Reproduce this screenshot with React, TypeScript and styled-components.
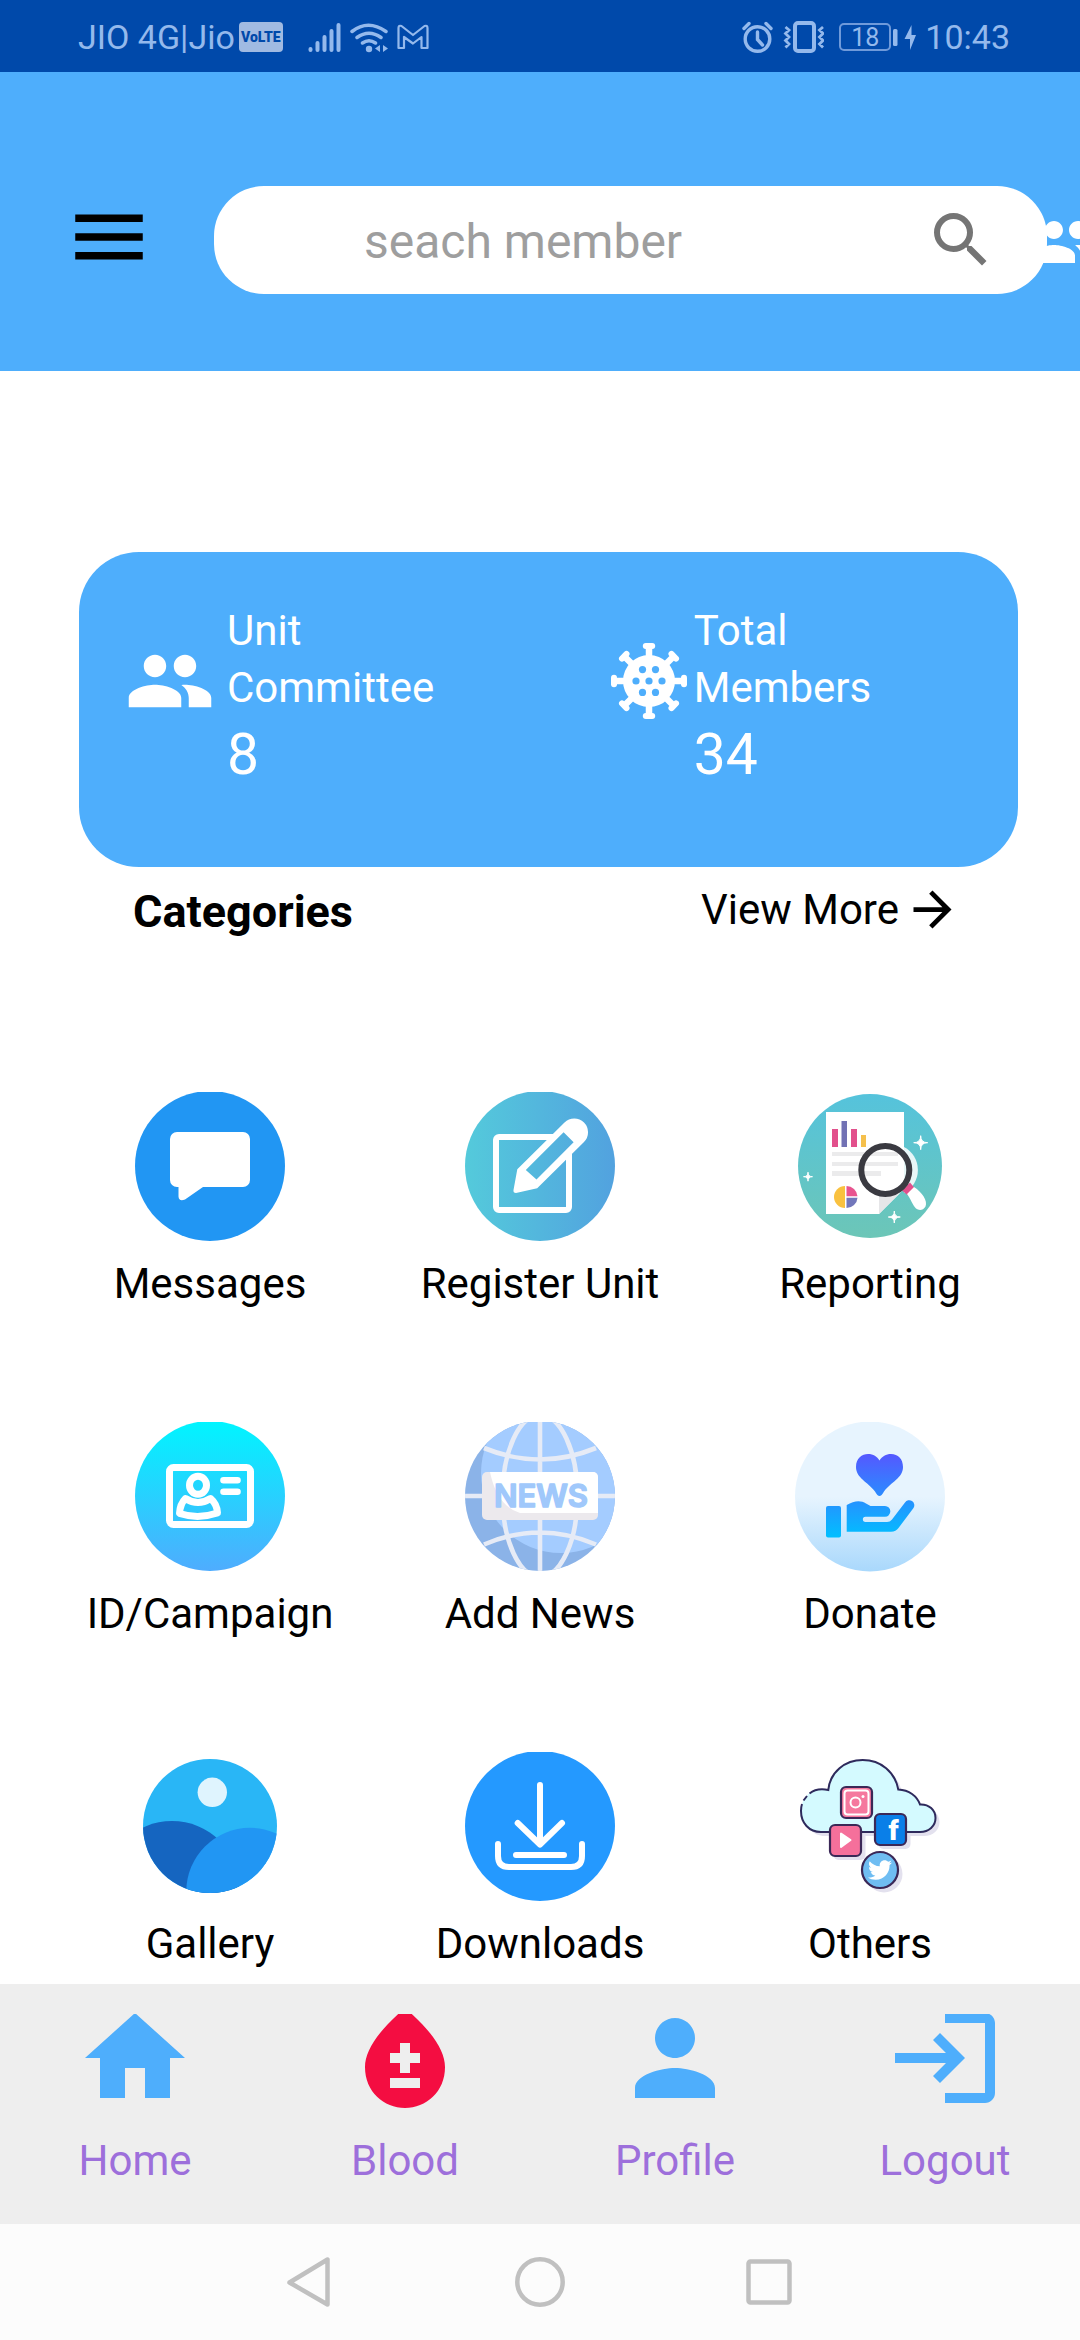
import React from 'react';
import styled, { createGlobalStyle } from 'styled-components';
import { MdPeople, MdSearch, MdMenu, MdArrowForward } from 'react-icons/md';
import { FaTwitter } from 'react-icons/fa';

const BLUE = '#4eaefc';
const STATUS_TINT = '#94b9ec';

const GlobalStyle = createGlobalStyle`
  *, *::before, *::after { box-sizing: border-box; }
  body { margin: 0; background: #ffffff; font-family: Roboto, "Noto Sans", sans-serif; color: #000000; }
  button, input { font: inherit; color: inherit; }
  svg { display: block; flex: none; }
`;

const Screen = styled.div`
  min-height: 100vh;
  display: flex;
  flex-direction: column;
  overflow-x: hidden;
`;

const StatusBar = styled.div`
  display: flex;
  align-items: center;
  justify-content: space-between;
  height: 72px;
  padding: 2px 70px 0 78px;
  background: #0049aa;
  color: ${STATUS_TINT};
  font-size: 34px;
  line-height: 40px;
`;

const StatusGroup = styled.div`
  display: flex;
  align-items: center;
`;

const VolteBadge = styled.span`
  width: 44px;
  height: 30px;
  margin: 0 24px 0 4px;
  border-radius: 4px;
  background: #a0bae2;
  color: #0049aa;
  font-size: 14px;
  font-weight: 900;
  line-height: 30px;
  text-align: center;
`;

const BatteryLevel = styled.span`
  width: 52px;
  height: 28px;
  margin-left: 15px;
  border: 2px solid #6f9ada;
  border-radius: 5px;
  font-size: 25px;
  line-height: 26px;
  text-align: center;
`;

const IconButton = styled.button`
  flex: none;
  padding: 0;
  border: 0;
  background: none;
  cursor: pointer;
`;

const Header = styled.header`
  display: flex;
  align-items: center;
  padding: 114px 0 77px 64px;
  background: ${BLUE};
  overflow: hidden;
`;

const MenuButton = styled(IconButton)`
  margin: 0 60px 6px 0;
`;

const SearchBox = styled.form`
  flex: 1;
  min-width: 0;
  display: flex;
  align-items: center;
  height: 108px;
  padding: 0 50px 0 150px;
  border-radius: 50px;
  background: #ffffff;
`;

const SearchInput = styled.input`
  flex: 1;
  min-width: 0;
  height: 72px;
  padding: 2px 0 0;
  border: 0;
  outline: 0;
  background: none;
  font-size: 48px;
  &::placeholder { color: #9e9e9e; opacity: 1; }
`;

const SearchButton = styled(IconButton)`
  color: #757575;
`;

const MembersButton = styled(IconButton)`
  margin: 4px -22px 0 -17px;
  color: #ffffff;
`;

const Main = styled.main`
  flex: 1;
`;

const StatsCard = styled.section`
  display: grid;
  grid-template-columns: 13fr 10fr;
  margin: 181px 62px 0 79px;
  padding: 50px 46px 73px;
  border-radius: 60px;
  background: ${BLUE};
  color: #ffffff;
`;

const Stat = styled.div<{ $gap: number }>`
  display: flex;
  align-items: flex-start;
  gap: ${(p) => p.$gap}px;
`;

const StatIcon = styled.div`
  margin-top: 34px;
`;

const StatLabel = styled.div`
  width: min-content;
  font-size: 42px;
  line-height: 57px;
`;

const StatValue = styled.div`
  font-size: 57px;
  line-height: 78px;
`;

const SectionBar = styled.div`
  display: flex;
  align-items: flex-start;
  justify-content: space-between;
  padding: 14px 119px 0 133px;
`;

const SectionTitle = styled.h2`
  margin: 2px 0 0;
  font-size: 45px;
  font-weight: 700;
  line-height: 57px;
`;

const ViewMore = styled.a`
  display: flex;
  align-items: flex-start;
  gap: 5px;
  color: inherit;
  text-decoration: none;
  font-size: 42px;
  line-height: 57px;
`;

const CategoryGrid = styled.div`
  display: grid;
  grid-template-columns: repeat(3, 1fr);
  row-gap: 110px;
  padding: 152px 45px 12px;
`;

const Category = styled.button`
  display: flex;
  flex-direction: column;
  align-items: center;
  gap: 13px;
  padding: 0;
  border: 0;
  background: none;
  font-size: 42px;
  line-height: 57px;
  white-space: nowrap;
  cursor: pointer;
`;

const TabBar = styled.nav`
  display: grid;
  grid-template-columns: repeat(4, 1fr);
  padding: 30px 0 35px;
  background: #eeeeee;
`;

const Tab = styled.a`
  display: flex;
  flex-direction: column;
  align-items: center;
  gap: 14px;
  color: #9d6fdb;
  text-decoration: none;
  font-size: 42px;
  line-height: 57px;
`;

const SystemBar = styled.div`
  display: flex;
  align-items: center;
  justify-content: center;
  gap: 180px;
  height: 116px;
  background: #fcfcfc;
`;

/* ---------- status bar glyphs ---------- */

const ConnectionIcons = () => (
  <svg width="122" height="32" viewBox="0 0 122 32" fill="none" stroke={STATUS_TINT} strokeLinecap="round">
    <g strokeWidth="4">
      <path d="M3.500 28v1M10.500 22v7M17.500 16v13M24.500 10v19M31.500 4v25" />
      <path d="M45 10.500Q61 -2 79 10.500M50 16.500Q62 8 74 16.500M55.500 22Q62 17.500 68.500 22" strokeWidth="3.500" />
    </g>
    <circle cx="62" cy="28" r="3.200" fill={STATUS_TINT} stroke="none" />
    <path d="M73 24v7l-5-3.500zM76 31v-7l5 3.500z" fill={STATUS_TINT} stroke="none" />
    <path
      d="M91.500 27V7q0-3 3-2L106 14l11.500-9q3-1 3 2v20h-6V16L106 22.500 97 16v11z"
      strokeWidth="2.200"
      strokeLinejoin="round"
    />
  </svg>
);

const AlarmVibrateIcons = () => (
  <svg width="82" height="32" viewBox="0 0 82 32" fill="none" stroke={STATUS_TINT} strokeWidth="3.400">
    <circle cx="15.500" cy="18" r="12.300" />
    <path d="M15.500 11v7.500l5 5.500M2 7.500l5-5M24 2.500l5 5" strokeLinecap="round" />
    <rect x="53" y="2" width="19" height="28" rx="3" strokeWidth="4" />
    <path
      d="M43.500 6l3.500 3-3.500 3.500 3.500 3.500-3.500 3.500 3.500 3.500-3.500 3.500M81 6l-3.500 3 3.500 3.500-3.500 3.500 3.500 3.500-3.500 3.500 3.500 3.500"
      strokeWidth="2.800"
    />
  </svg>
);

const ChargingIcon = () => (
  <svg width="34" height="32" viewBox="0 0 34 32" fill={STATUS_TINT}>
    <rect x="2" y="8" width="4.500" height="17" rx="1.500" />
    <path d="M20.500 4v10h4.500l-6 15V18h-5.500z" />
  </svg>
);

/* ---------- stat card ---------- */

const VirusIcon = () => (
  <svg width="90" height="90" viewBox="-45 -45 90 90">
    <g fill="none" stroke="#ffffff" strokeLinecap="round">
      {[0, 45, 90, 135, 180, 225, 270, 315].map((a) => (
        <g key={a} transform={`rotate(${a})`}>
          <path d="M0 -24V-34" strokeWidth="6.500" />
          <path d="M-3.200 -35H3.200" strokeWidth="6" />
        </g>
      ))}
    </g>
    <circle r="26" fill="#ffffff" />
    <g fill={BLUE}>
      <circle r="3.600" />
      <circle cx="-13" r="3.600" />
      <circle cx="13" r="3.600" />
      <circle cx="-6.500" cy="-11.400" r="3.600" />
      <circle cx="6.500" cy="-11.400" r="3.600" />
      <circle cx="-6.500" cy="11.400" r="3.600" />
      <circle cx="6.500" cy="11.400" r="3.600" />
    </g>
  </svg>
);

/* ---------- category artwork, 150 x 150 each ---------- */

const Art = ({ children }: { children: React.ReactNode }) => (
  <svg width="150" height="150" viewBox="0 0 150 150" aria-hidden="true">
    {children}
  </svg>
);

const MessagesArt = () => (
  <Art>
    <circle cx="75" cy="74" r="75" fill="#2196f3" />
    <path
      d="M42 40H108a7 7 0 0 1 7 7V88a7 7 0 0 1-7 7H68L50 107.500q-6 2.500-6.500-3V95H42a7 7 0 0 1-7-7V47a7 7 0 0 1 7-7z"
      fill="#ffffff"
    />
  </Art>
);

const RegisterArt = () => (
  <Art>
    <defs>
      <linearGradient id="register" x1="0" x2="1">
        <stop offset="0" stopColor="#54cadb" />
        <stop offset="1" stopColor="#52a2df" />
      </linearGradient>
    </defs>
    <circle cx="75" cy="74" r="75" fill="url(#register)" />
    <path d="M88 45H34a3 3 0 0 0-3 3V115a3 3 0 0 0 3 3H101a3 3 0 0 0 3-3V62" fill="none" stroke="#ffffff" strokeWidth="6" />
    <path
      fillRule="evenodd"
      d="M52.300 77.300L99.500 30.500A13.500 13.500 0 0 1 119 50L72.200 96.300 51 101Q48 101 48.500 98zM98.600 40.300L60.800 78 71.500 87.500 108.600 50.300z"
      fill="#ffffff"
    />
  </Art>
);

const sparkle = (x: number, y: number, r: number) =>
  `M${x} ${y - r}Q${x} ${y} ${x + r} ${y}Q${x} ${y} ${x} ${y + r}Q${x} ${y} ${x - r} ${y}Q${x} ${y} ${x} ${y - r}z`;

const ReportingArt = () => (
  <Art>
    <defs>
      <linearGradient id="report" x1="0" y1="0" x2="0" y2="1">
        <stop offset="0" stopColor="#55c3dc" />
        <stop offset="1" stopColor="#6cc6b7" />
      </linearGradient>
    </defs>
    <circle cx="75" cy="74" r="72" fill="url(#report)" />
    <path d="M31 20H109V97L84 122H31z" fill="#ffffff" />
    <path d="M84 122V104L104 102z" fill="#e6e6e8" />
    <path d="M37 37h6v18h-6zM56 37h6v18h-6z" fill="#e2508c" />
    <path d="M46.500 29h5.500v26h-5.500z" fill="#7272b4" />
    <path d="M66 43h5v12h-5z" fill="#f5c04c" />
    <path d="M37 60h66v4H37zM37 70h66v4H37zM37 79h49v5H37z" fill="#ebebec" />
    <path d="M50 94a11 11 0 0 0 0 22z" fill="#f9c13f" />
    <path d="M51.500 94a11 11 0 0 1 11 10.300h-11z" fill="#e8548f" />
    <path d="M62.500 105.700a11 11 0 0 1-11 10.300v-10.300z" fill="#7277bb" />
    <path d="M109 55A26 26 0 0 1 109 101z" fill="#ffffff" opacity="0.850" />
    <path d="M107 98.500l8-8 5 6-7 7z" fill="#e2508c" />
    <path d="M112 102l7-7C127 100 133 109 130.500 114.500 128 119 123.500 118.500 121 116.500 117.500 113 116 107.500 112 102z" fill="#ffffff" />
    <circle cx="90.300" cy="78" r="24" fill="none" stroke="#3a3a41" strokeWidth="6" />
    <path d={`${sparkle(125.7, 50.7, 7)}${sparkle(13, 84.7, 4.5)}${sparkle(99.3, 125, 6)}`} fill="#ffffff" stroke="#ffffff" strokeWidth="1" />
  </Art>
);

const IdArt = () => (
  <Art>
    <defs>
      <linearGradient id="idcard" x1="0" y1="0" x2="0" y2="1">
        <stop offset="0" stopColor="#00f5ff" />
        <stop offset="1" stopColor="#4facfe" />
      </linearGradient>
    </defs>
    <circle cx="75" cy="74" r="75" fill="url(#idcard)" />
    <g fill="none" stroke="#ffffff" strokeWidth="7" strokeLinejoin="round">
      <rect x="34.500" y="45.500" width="81" height="57" rx="4" />
      <ellipse cx="63" cy="63.200" rx="8.500" ry="9" />
      <path d="M50.500 76.500Q63 84.500 75.500 76.500Q82 82 82.500 91Q63 97.500 44.500 91.500Q45 82 50.500 76.500z" />
      <path d="M88.500 58.300H102.500M88.500 69.700H102.500" strokeLinecap="round" strokeWidth="6.600" />
    </g>
  </Art>
);

const NewsArt = () => (
  <Art>
    <defs>
      <clipPath id="globe">
        <circle cx="75" cy="74" r="75" />
      </clipPath>
      <clipPath id="banner">
        <rect x="17" y="50" width="116" height="48" rx="5" />
      </clipPath>
    </defs>
    <g clipPath="url(#globe)">
      <rect width="150" height="150" fill="#8bb3e8" />
      <circle cx="96" cy="51" r="80" fill="#a4ccff" />
      <g fill="none" stroke="#e6ebf6" strokeWidth="4.600">
        <path d="M75 -2V152M0 74H150M19 26Q75 49 131 26M19 122.500Q75 98.500 131 122.500" />
        <ellipse cx="75" cy="74" rx="37.500" ry="81" />
      </g>
    </g>
    <g clipPath="url(#banner)">
      <rect x="17" y="50" width="116" height="48" fill="#ece9ed" />
      <path d="M25 50H133V91H55Q32 84 25 50z" fill="#ffffff" />
    </g>
    <text
      x="76"
      y="85"
      textAnchor="middle"
      fontFamily="Inter, Roboto, sans-serif"
      fontSize="31"
      fontWeight="600"
      fill="#a0c8fb"
      stroke="#a0c8fb"
      strokeWidth="1.500"
      strokeLinejoin="round"
    >
      NEWS
    </text>
  </Art>
);

const DonateArt = () => (
  <Art>
    <defs>
      <linearGradient id="donateBack" x1="0" y1="0" x2="0" y2="1">
        <stop offset="0" stopColor="#e7f4fe" />
        <stop offset="0.500" stopColor="#e7f4fe" />
        <stop offset="1" stopColor="#a9d8fc" />
      </linearGradient>
      <linearGradient id="donate" gradientUnits="userSpaceOnUse" x1="0" y1="32" x2="0" y2="116">
        <stop offset="0" stopColor="#5558ff" />
        <stop offset="1" stopColor="#00c0ff" />
      </linearGradient>
    </defs>
    <circle cx="75" cy="74.500" r="75" fill="url(#donateBack)" />
    <g fill="url(#donate)">
      <path d="M84.500 74Q82.500 74 80 69.500C73 60 61 56 61 45 61 36 67 32 73 32 78.500 32 82 34.500 84.500 38.500 87 34.500 91 32 96 32 103 32 108 37 108 45 108 56 96 60 89 69.500Q86.500 74 84.500 74z" />
      <rect x="31" y="84" width="15" height="31.500" rx="2" />
      <path d="M51.700 83C59 78.500 66 78 71 81.500L75.500 84H90a5.300 5.300 0 0 1 0 10.700H70.500a2.600 2.600 0 0 0 0 5.300H92q3 0 5-2.500L110 80.500a5 5 0 0 1 8.500 5.500L103.500 106Q101 109.700 96 109.700H51.700z" />
    </g>
  </Art>
);

const GalleryArt = () => (
  <Art>
    <defs>
      <clipPath id="gallery">
        <circle cx="75" cy="74" r="67" />
      </clipPath>
    </defs>
    <g clipPath="url(#gallery)">
      <rect width="150" height="150" fill="#29b6f6" />
      <circle cx="77.300" cy="40.300" r="14.700" fill="#dff4fe" />
      <circle cx="37" cy="137" r="68" fill="#1565c0" />
      <circle cx="115" cy="139.500" r="63.700" fill="#2196f3" />
    </g>
  </Art>
);

const DownloadsArt = () => (
  <Art>
    <circle cx="75" cy="74" r="75" fill="#2499ff" />
    <g fill="none" stroke="#ffffff" strokeWidth="6" strokeLinecap="round" strokeLinejoin="round">
      <path d="M75 33V92M52.700 71L75 92.500 97 71" />
      <path d="M33 92V104q0 11 11 11H106q11 0 11-11V92M51 103H99" />
    </g>
  </Art>
);

const CLOUD =
  'M25 37Q29 36.500 33.300 38C35 20 50 8 67.700 8 86 8 100 20 103.300 37.500 114 38 122 44 125 52.500 134 52 140.500 58 140.500 66 140.500 74 134 80 125 80H26C14 80 6 71 6 59 6 47 14 38 25 37z';

const OthersArt = () => (
  <Art>
    <g fill="#e3e1ee" transform="translate(4 4)">
      <path d={CLOUD} />
      <rect x="34.500" y="73" width="32" height="31" rx="5" />
      <rect x="79.500" y="62" width="32" height="31" rx="5" />
      <circle cx="85" cy="118" r="18.500" />
    </g>
    <path d={CLOUD} fill="#d4faff" />
    <g fill="none" stroke="#2e2a5c" strokeWidth="2">
      <path d="M14.500 41.500Q22 35.500 33.300 38C35 20 50 8 67.700 8 86 8 100 20 103.300 37.500 114 38 122 44 125 52.500 134 52 140.500 58 140.500 66 140.500 74 134 80 125 80H26C14 80 6 71 6 59Q6 55 7 52M8.500 48.500L12 44" />
    </g>
    <g stroke="#3b2857" strokeWidth="2.200">
      <rect x="46" y="35" width="31" height="31" rx="5" fill="#f5789e" />
      <rect x="35" y="73" width="31" height="31" rx="5" fill="#f5709b" />
      <rect x="80" y="62" width="31" height="31" rx="5" fill="#0a7fe8" />
      <circle cx="85" cy="118" r="18" fill="#6fbdf2" />
    </g>
    <g fill="none" stroke="#ffffff" strokeWidth="2">
      <rect x="49.500" y="38.500" width="24" height="24" rx="3" />
      <circle cx="60.500" cy="50.500" r="5" />
    </g>
    <circle cx="68" cy="44.500" r="1.500" fill="#ffffff" />
    <path d="M46 81.500v13.500l9.500-7z" fill="#ffffff" stroke="#ffffff" strokeWidth="2" strokeLinejoin="round" />
    <text x="98.500" y="88" textAnchor="middle" fontFamily="Roboto, sans-serif" fontSize="28" fontWeight="900" fill="#ffffff">
      f
    </text>
    <FaTwitter x="73" y="106" size={24} color="#ffffff" />
  </Art>
);

/* ---------- tab bar: 24-unit icons with the blank top strip left out ---------- */

const TabIcon = ({ d, color = BLUE }: { d: string; color?: string }) => (
  <svg width="120" height="104" viewBox="0 3.200 24 20.800" fill={color} aria-hidden="true">
    <path d={d} />
  </svg>
);

const categories = [
  { name: 'Messages', Picture: MessagesArt },
  { name: 'Register Unit', Picture: RegisterArt },
  { name: 'Reporting', Picture: ReportingArt },
  { name: 'ID/Campaign', Picture: IdArt },
  { name: 'Add News', Picture: NewsArt },
  { name: 'Donate', Picture: DonateArt },
  { name: 'Gallery', Picture: GalleryArt },
  { name: 'Downloads', Picture: DownloadsArt },
  { name: 'Others', Picture: OthersArt },
];

const tabs = [
  { name: 'Home', d: 'M10 20v-6h4v6h5v-8h3L12 3 2 12h3v8z' },
  {
    name: 'Blood',
    color: '#f40d41',
    d: 'M12 2c-5.330 4.550-8 8.480-8 11.800 0 4.980 3.800 8.200 8 8.200s8-3.220 8-8.200c0-3.320-2.670-7.250-8-11.800zm3 16H9v-2h6v2zm0-5h-2v2h-2v-2H9v-2h2V9h2v2h2v2z',
  },
  {
    name: 'Profile',
    d: 'M12 12c2.210 0 4-1.790 4-4s-1.790-4-4-4-4 1.790-4 4 1.790 4 4 4zm0 2c-2.670 0-8 1.340-8 4v2h16v-2c0-2.660-5.330-4-8-4z',
  },
  {
    name: 'Logout',
    d: 'M11 7L9.600 8.400l2.600 2.600H2v2h10.200l-2.600 2.600L11 17l5-5-5-5zm9 12h-8v2h8c1.100 0 2-.9 2-2V5c0-1.100-.9-2-2-2h-8v2h8v14z',
  },
];

export default function App() {
  return (
    <Screen>
      <GlobalStyle />
      <StatusBar>
        <StatusGroup>
          <span>JIO 4G|Jio</span>
          <VolteBadge>VoLTE</VolteBadge>
          <ConnectionIcons />
        </StatusGroup>
        <StatusGroup>
          <AlarmVibrateIcons />
          <BatteryLevel>18</BatteryLevel>
          <ChargingIcon />
          <span>10:43</span>
        </StatusGroup>
      </StatusBar>

      <Header>
        <MenuButton type="button" aria-label="Open menu">
          <MdMenu size={90} />
        </MenuButton>
        <SearchBox role="search" onSubmit={(e) => e.preventDefault()}>
          <SearchInput type="text" placeholder="seach member" aria-label="seach member" />
          <SearchButton type="submit" aria-label="Search">
            <MdSearch size={72} />
          </SearchButton>
        </SearchBox>
        <MembersButton type="button" aria-label="Members">
          <MdPeople size={72} />
        </MembersButton>
      </Header>

      <Main>
        <StatsCard>
          <Stat $gap={12}>
            <StatIcon>
              <MdPeople size={90} />
            </StatIcon>
            <div>
              <StatLabel>Unit Committee</StatLabel>
              <StatValue>8</StatValue>
            </div>
          </Stat>
          <Stat $gap={0}>
            <StatIcon>
              <VirusIcon />
            </StatIcon>
            <div>
              <StatLabel>Total Members</StatLabel>
              <StatValue>34</StatValue>
            </div>
          </Stat>
        </StatsCard>

        <SectionBar>
          <SectionTitle>Categories</SectionTitle>
          <ViewMore href="#categories">
            View More
            <MdArrowForward size={57} />
          </ViewMore>
        </SectionBar>

        <CategoryGrid id="categories">
          {categories.map(({ name, Picture }) => (
            <Category key={name} type="button">
              <Picture />
              {name}
            </Category>
          ))}
        </CategoryGrid>
      </Main>

      <TabBar>
        {tabs.map((tab) => (
          <Tab key={tab.name} href={`#${tab.name.toLowerCase()}`}>
            <TabIcon d={tab.d} color={tab.color} />
            {tab.name}
          </Tab>
        ))}
      </TabBar>

      <SystemBar>
        <IconButton type="button" aria-label="Back">
          <svg width="50" height="50" viewBox="0 0 50 50" fill="none" stroke="#c0c0c0" strokeWidth="4.500" strokeLinejoin="round">
            <path d="M4.500 25.500L42.500 2.500V47.500z" />
          </svg>
        </IconButton>
        <IconButton type="button" aria-label="Home screen">
          <svg width="50" height="50" viewBox="0 0 50 50" fill="none" stroke="#c0c0c0" strokeWidth="4.500">
            <circle cx="25" cy="25" r="22.700" />
          </svg>
        </IconButton>
        <IconButton type="button" aria-label="Recent apps">
          <svg width="50" height="50" viewBox="0 0 50 50" fill="none" stroke="#c0c0c0" strokeWidth="4.500">
            <rect x="3.500" y="4.500" width="41" height="41" rx="2" />
          </svg>
        </IconButton>
      </SystemBar>
    </Screen>
  );
}
